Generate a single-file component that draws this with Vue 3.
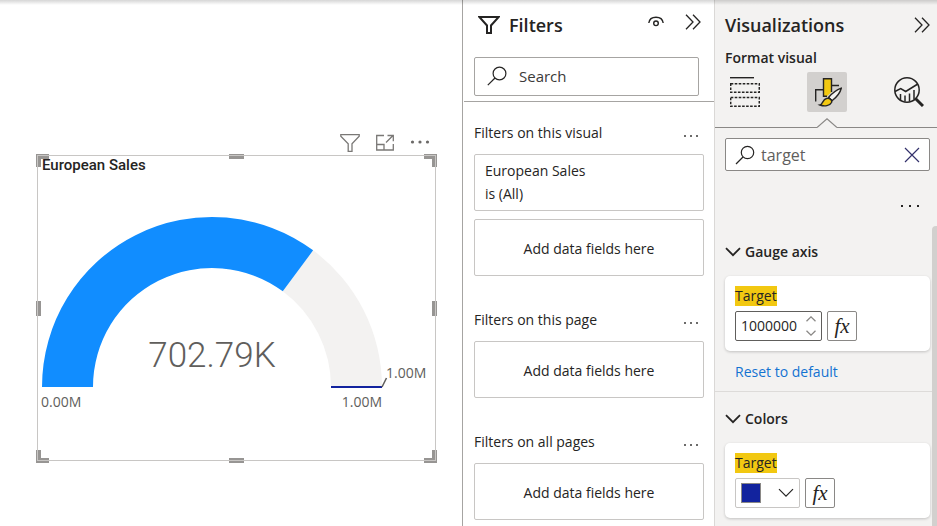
<script setup>
import { ref, computed } from 'vue'

const filterSearch = ref('')
const formatSearch = ref('target')
const target = ref(1000000)
const share = 0.70279

const cx = 174
const cy = 213
const outer = 170
const inner = 119

function band(from, to) {
  const point = (radius, part) => {
    const angle = Math.PI * (1 - part)
    return `${(cx + radius * Math.cos(angle)).toFixed(2)} ${(cy - radius * Math.sin(angle)).toFixed(2)}`
  }
  return `M${point(outer, from)}A${outer} ${outer} 0 0 1 ${point(outer, to)}L${point(inner, to)}A${inner} ${inner} 0 0 0 ${point(inner, from)}Z`
}

const filled = computed(() => band(0, share))
const rest = computed(() => band(share, 1))

const handles = ['tl', 'tc', 'tr', 'ml', 'mr', 'bl', 'bc', 'br']

const sections = [
  { title: 'Filters on this visual', cards: [['European Sales', 'is (All)']] },
  { title: 'Filters on this page', cards: [] },
  { title: 'Filters on all pages', cards: [] }
]
</script>

<template>
  <div class="app">
    <main class="canvas">
      <div class="visual-tools">
        <button class="plain" aria-label="Filters on visual">
          <svg width="20" height="20" viewBox="0 0 20 20" fill="none" stroke="#7a7876" stroke-width="1.300">
            <path d="M.8 1.600h18.400v1.600L12 10.700V18.400H8.200V10.700L.8 3.200z" />
          </svg>
        </button>
        <button class="plain" aria-label="Focus mode">
          <svg width="20" height="20" viewBox="0 0 20 20" fill="none" stroke="#7a7876" stroke-width="1.300">
            <path d="M9 2.500H1.700v14.500h16.600V11M1.700 11.500H9V17M11 9.500l7-7M12.500 2.500h5.800v5.800" />
          </svg>
        </button>
        <button class="plain" aria-label="More options">
          <svg width="20" height="20" viewBox="0 0 20 20" fill="#6b6967">
            <circle cx="2.500" cy="9" r="1.600" /><circle cx="10" cy="9" r="1.600" /><circle cx="17.500" cy="9" r="1.600" />
          </svg>
        </button>
      </div>
      <section class="visual">
        <h2 class="visual-title">European Sales</h2>
        <svg class="gauge" viewBox="0 0 397 286" role="img" aria-label="European Sales gauge">
          <path :d="rest" fill="#f3f2f1" />
          <path :d="filled" fill="#118dff" />
          <path d="M293 213h51" stroke="#12239e" stroke-width="2" />
          <path d="M344 213l4.500-9" stroke="#605e5c" stroke-width="1.500" />
          <text class="big" x="174" y="193" text-anchor="middle">702.79K</text>
          <text class="tick" x="3" y="233">0.00M</text>
          <text class="tick" x="344" y="233" text-anchor="end">1.00M</text>
          <text class="tick" x="348" y="204">1.00M</text>
        </svg>
        <span v-for="h in handles" :key="h" class="handle" :class="h"></span>
        <span class="outline"></span>
      </section>
    </main>

    <aside class="filters">
      <header class="filters-head">
        <svg width="22" height="20" viewBox="0 0 22 20" fill="none" stroke="#252423" stroke-width="2">
          <path d="M1.300 2h19.400L13 10.500V18H9V10.500z" />
        </svg>
        <h1 class="pane-title">Filters</h1>
        <button class="plain eye" aria-label="Show filter pane">
          <svg width="16" height="12" viewBox="0 0 16 12" fill="none" stroke="#252423" stroke-width="1.400">
            <path d="M.8 7C1.300 3.300 4.300 1.200 8 1.200S14.700 3.300 15.200 7" /><circle cx="8" cy="7.300" r="2.300" />
          </svg>
        </button>
        <button class="plain" aria-label="Collapse filters">
          <svg width="16" height="16" viewBox="0 0 16 16" fill="none" stroke="#252423" stroke-width="1.300">
            <path d="M1 .8l7 7.200-7 7.200M8 .8l7 7.200-7 7.200" />
          </svg>
        </button>
      </header>
      <label class="search filter-search">
        <svg width="20" height="20" viewBox="0 0 20 20" fill="none" stroke="#252423" stroke-width="1.200">
          <circle cx="12.500" cy="7.500" r="6.400" /><path d="M8 12L.8 19.200" />
        </svg>
        <input v-model="filterSearch" type="text" placeholder="Search" aria-label="Search filters" />
      </label>
      <div class="filter-list">
        <section v-for="s in sections" :key="s.title" class="filter-section">
          <div class="section-head">
            <h2>{{ s.title }}</h2>
            <button class="plain" :aria-label="s.title + ' options'">
              <svg width="16" height="16" viewBox="0 0 16 16" fill="#3b3a39">
                <circle cx="2" cy="11" r="1" /><circle cx="8" cy="11" r="1" /><circle cx="14" cy="11" r="1" />
              </svg>
            </button>
          </div>
          <div v-for="card in s.cards" :key="card[0]" class="card">
            <p v-for="line in card" :key="line">{{ line }}</p>
          </div>
          <div class="card drop">Add data fields here</div>
        </section>
      </div>
    </aside>

    <aside class="format">
      <div class="format-head">
        <header class="format-title">
          <h1 class="pane-title">Visualizations</h1>
          <button class="plain" aria-label="Collapse visualizations">
            <svg width="16" height="16" viewBox="0 0 16 16" fill="none" stroke="#252423" stroke-width="1.300">
              <path d="M1 .8l7 7.200-7 7.200M8 .8l7 7.200-7 7.200" />
            </svg>
          </button>
        </header>
        <h2 class="format-sub">Format visual</h2>
        <nav class="tabs">
          <button class="tab" aria-label="Build visual">
            <svg width="30" height="30" viewBox="0 0 30 30" fill="none" stroke="#252423">
              <path d="M0 .7h24" stroke-width="1.400" />
              <path d="M.7 6.700h28.600v8.600H.7zM.7 20.500h28.600v8.800H.7z" stroke-width="1.500" stroke-dasharray="2.600 1.400" />
            </svg>
          </button>
          <button class="tab active" aria-label="Format visual">
            <svg width="30" height="30" viewBox="0 0 30 30" fill="none" stroke="#252423" stroke-width="1.400">
              <path d="M3.700 24.500V12.700h8M19.500 8.500h7.500" />
              <path d="M19.500 15V1.800h-8v17.500h3.500" fill="#f2c811" />
              <path d="M16.500 20.500C19.500 17 25 12.800 29.300 11.200C28.300 15 24.500 20.300 20 23.700z" fill="#f3f2f1" />
              <path d="M16.500 20.500l3.500 3.200" />
              <path d="M8 28c2.600-.5 2.600-5.600 6.500-6.500 3.200-.7 6 1.600 5 4-1.500 3.300-7 4.200-11.500 2.500z" fill="#f2c811" />
            </svg>
          </button>
          <button class="tab" aria-label="Analytics">
            <svg width="30" height="30" viewBox="0 0 30 30" fill="none" stroke="#252423" stroke-width="1.500">
              <circle cx="13" cy="13" r="12.200" />
              <path d="M1 14.500l5.700-3 5 3L23.800 7" />
              <path d="M6.500 23V17M11 24.500V18.500M15.500 24.500V16.500M20 22.500V13" />
              <path d="M21.700 21.700l7.300 7.300" stroke-width="3" />
            </svg>
          </button>
        </nav>
        <div class="notch">
          <span class="rule"></span>
          <svg width="20" height="10" viewBox="0 0 20 10" fill="none" stroke="#8a8886" stroke-width="1.200">
            <path d="M0 9.500L10 .8l10 8.700" />
          </svg>
          <span class="rule"></span>
        </div>
        <label class="search format-search">
          <svg width="20" height="20" viewBox="0 0 20 20" fill="none" stroke="#252423" stroke-width="1.200">
            <circle cx="12.500" cy="7.500" r="6.200" /><path d="M8 12L1 19" />
          </svg>
          <input v-model="formatSearch" type="text" aria-label="Search format options" />
          <button class="plain" aria-label="Clear search" @click="formatSearch = ''">
            <svg width="16" height="16" viewBox="0 0 16 16" fill="none" stroke="#33316b" stroke-width="1.200">
              <path d="M1 1l14 14M15 1L1 15" />
            </svg>
          </button>
        </label>
        <button class="plain more" aria-label="More format options">
          <svg width="20" height="4" viewBox="0 0 20 4" fill="#252423">
            <path d="M1 1h2v2H1zM9 1h2v2H9zM17 1h2v2h-2z" />
          </svg>
        </button>
      </div>
      <div class="format-body">
        <div class="groups">
          <section class="group">
            <button class="group-head">
              <svg width="16" height="10" viewBox="0 0 16 10" fill="none" stroke="#252423" stroke-width="1.800"><path d="M1 1.200l7 7 7-7" /></svg>
              Gauge axis
            </button>
            <div class="panel">
              <label class="mark" for="target-value">Target</label>
              <div class="controls">
                <div class="number">
                  <input id="target-value" v-model="target" type="number" />
                  <span class="steps">
                    <button class="plain" aria-label="Increase" @click="target++">
                      <svg width="10" height="6" viewBox="0 0 10 6" fill="none" stroke="#8a8886" stroke-width="1.300"><path d="M.5 5.300L5 .9l4.500 4.400" /></svg>
                    </button>
                    <button class="plain" aria-label="Decrease" @click="target--">
                      <svg width="10" height="6" viewBox="0 0 10 6" fill="none" stroke="#8a8886" stroke-width="1.300"><path d="M.5 .7L5 5.100 9.500 .7" /></svg>
                    </button>
                  </span>
                </div>
                <button class="fx">fx</button>
              </div>
            </div>
            <a class="reset" href="#">Reset to default</a>
          </section>
          <section class="group">
            <button class="group-head">
              <svg width="16" height="10" viewBox="0 0 16 10" fill="none" stroke="#252423" stroke-width="1.800"><path d="M1 1.200l7 7 7-7" /></svg>
              Colors
            </button>
            <div class="panel">
              <label class="mark" for="target-color">Target</label>
              <div class="controls">
                <button id="target-color" class="color" aria-haspopup="true">
                  <span class="swatch"></span>
                  <svg width="16" height="10" viewBox="0 0 16 10" fill="none" stroke="#252423" stroke-width="1.200"><path d="M1 1.200l7 7 7-7" /></svg>
                </button>
                <button class="fx">fx</button>
              </div>
            </div>
          </section>
        </div>
        <div class="scrollbar"></div>
      </div>
    </aside>
    <div class="top-shade"></div>
  </div>
</template>

<style>
body {
  margin: 0;
  background: #fff;
}
</style>

<style scoped>
.app,
.app * {
  box-sizing: border-box;
}
.app {
  position: relative;
  display: grid;
  grid-template-columns: minmax(0, 1fr) 252px 223px;
  min-height: 100vh;
  font: 14px/20px "Open Sans", "Noto Sans", sans-serif;
  color: #252423;
}
.top-shade {
  position: absolute;
  inset: 0 0 auto;
  height: 5px;
  background: linear-gradient(rgba(0, 0, 0, 0.16), rgba(0, 0, 0, 0));
  pointer-events: none;
}
h1,
h2,
p {
  margin: 0;
  font: inherit;
}
button,
input {
  font: inherit;
  color: inherit;
}
svg {
  display: block;
  flex: none;
}
.plain {
  display: block;
  padding: 0;
  border: 0;
  background: none;
}
.pane-title {
  font-size: 18px;
  line-height: 24px;
  font-weight: 600;
}

.canvas {
  padding: 130px 26px 0 37px;
}
.visual-tools {
  display: flex;
  justify-content: flex-end;
  gap: 15px;
  height: 25px;
  padding-right: 6px;
}
.visual {
  position: relative;
  padding: 1px;
}
.visual-title {
  padding-left: 4px;
  font: 500 15px/18px Roboto, sans-serif;
}
.gauge {
  width: 100%;
  height: auto;
}
.big {
  font: 300 36px Roboto, sans-serif;
  font-size: 35px;
  fill: #605e5c;
}
.tick {
  font: 14px "Open Sans", sans-serif;
  fill: #605e5c;
}
.outline {
  position: absolute;
  inset: 0;
  border: 1px solid #c8c6c4;
  pointer-events: none;
}
.handle {
  position: absolute;
  width: 13px;
  height: 13px;
  border: 0 solid #979593;
}
.tl, .tc, .tr { top: -1px; }
.bl, .bc, .br { bottom: -2px; }
.tl, .ml, .bl { left: -1px; }
.tr, .mr, .br { right: -1px; }
.tl, .tr { border-top-width: 5px; }
.bl, .br { border-bottom-width: 5px; }
.tl, .bl { border-left-width: 5px; }
.tr, .br { border-right-width: 5px; }
.tc, .bc {
  left: calc(50% - 8px);
  width: 15px;
  height: 5px;
  background: #979593;
}
.ml, .mr {
  top: calc(50% - 7px);
  width: 5px;
  height: 15px;
  background: #979593;
}

.filters {
  border-left: 1px solid #a6a4a2;
}
.filters-head {
  display: flex;
  align-items: center;
  height: 57px;
  padding: 0 13px 8px 15px;
}
.filters-head .pane-title {
  margin: 0 auto 0 9px;
}
.eye {
  margin: 0 21px 6px 0;
}
.filters-head .eye + .plain {
  margin-bottom: 6px;
}
.search {
  display: flex;
  align-items: center;
  background: #fff;
  border-radius: 2px;
}
.search input {
  flex: 1;
  min-width: 0;
  padding: 0;
  border: 0;
  outline: 0;
  background: none;
}
.filter-search {
  height: 39px;
  margin: 0 15px 5px 11px;
  padding: 0 12px 2px;
  gap: 12px;
  border: 1px solid #a6a4a2;
  font-size: 15px;
}
.filter-search input::placeholder {
  color: #3b3a39;
  opacity: 1;
}
.filter-list {
  display: flex;
  flex-direction: column;
  gap: 34px;
  margin-left: 1px;
  padding: 21px 10px 6px;
  border-top: 1px solid #a6a4a2;
}
.filter-section {
  display: flex;
  flex-direction: column;
  gap: 8px;
}
.section-head {
  display: flex;
  align-items: center;
  justify-content: space-between;
  height: 20px;
  margin-bottom: 3px;
  padding-right: 5px;
}
.card {
  height: 57px;
  padding: 4px 10px;
  border: 1px solid #c8c6c4;
  border-radius: 2px;
  line-height: 23px;
}
.drop {
  display: grid;
  place-items: center;
  padding: 6px 10px 4px;
}

.format {
  display: flex;
  flex-direction: column;
  background: #f3f2f1;
  border-left: 1px solid #dad8d6;
}
.format-head {
  padding: 13px 0 0;
}
.format-title,
.tabs {
  display: flex;
  align-items: center;
  justify-content: space-between;
  padding: 0 7px 0 10px;
}
.tabs {
  padding-right: 8px;
}
.format-sub {
  padding: 11px 10px 4px;
  font-weight: 600;
}
.tab {
  display: grid;
  place-items: center;
  width: 40px;
  height: 40px;
  padding: 0;
  border: 0;
  border-radius: 2px;
  background: none;
}
.active {
  background: #d2d0ce;
}
.notch {
  display: flex;
  align-items: flex-end;
  margin-top: 6px;
}
.rule {
  flex: 1 1 102px;
  border-bottom: 1px solid #8a8886;
}
.rule:last-child {
  flex-basis: 100px;
}
.format-search {
  height: 33px;
  margin: 10px 7px 0 10px;
  padding: 0 9px;
  gap: 6px;
  border: 1px solid #8a8886;
  font-size: 16px;
  color: #605e5c;
}
.more {
  margin: 33px 17px 18px auto;
}
.format-body {
  display: flex;
  flex: 1;
}
.groups {
  flex: 1;
}
.group + .group {
  border-top: 1px solid #dddbd9;
}
.group {
  padding: 16px 2px 9px 10px;
}
.group + .group {
  padding-top: 17px;
}
.group-head {
  display: flex;
  align-items: center;
  gap: 4px;
  padding: 0;
  border: 0;
  background: none;
  font-weight: 600;
}
.panel {
  height: 75px;
  margin-top: 14px;
  padding: 10px;
  background: #fff;
  border-radius: 5px;
  box-shadow: 0 1px 3px rgba(0, 0, 0, 0.2);
}
.mark {
  display: block;
  width: fit-content;
  background: #f2c811;
}
.controls {
  display: flex;
  gap: 5px;
  margin-top: 5px;
}
.number,
.color,
.fx {
  height: 30px;
  border: 1px solid #8a8886;
  border-radius: 2px;
  background: #fff;
}
.number {
  display: flex;
  align-items: center;
  width: 87px;
  padding: 0 5px;
  border-color: #605e5c;
}
.number input {
  flex: 1;
  min-width: 0;
  padding: 0;
  border: 0;
  outline: 0;
  appearance: textfield;
}
.number input::-webkit-inner-spin-button {
  appearance: none;
  margin: 0;
}
.steps {
  display: grid;
  gap: 8px;
}
.fx {
  width: 30px;
  padding: 0;
  font: italic 21px/24px "Liberation Serif", serif;
}
.color {
  display: flex;
  align-items: center;
  justify-content: space-between;
  width: 65px;
  padding: 0 5px;
  border-color: #c8c6c4;
}
.swatch {
  width: 20px;
  height: 20px;
  background: #12239e;
  border: 1px solid #8a8886;
}
.reset {
  display: block;
  width: fit-content;
  margin: 11px 0 0 10px;
  color: #1373d1;
  text-decoration: none;
}
.scrollbar {
  width: 5px;
  background: #d2d0ce;
  border-radius: 4px 0 0;
}
</style>
